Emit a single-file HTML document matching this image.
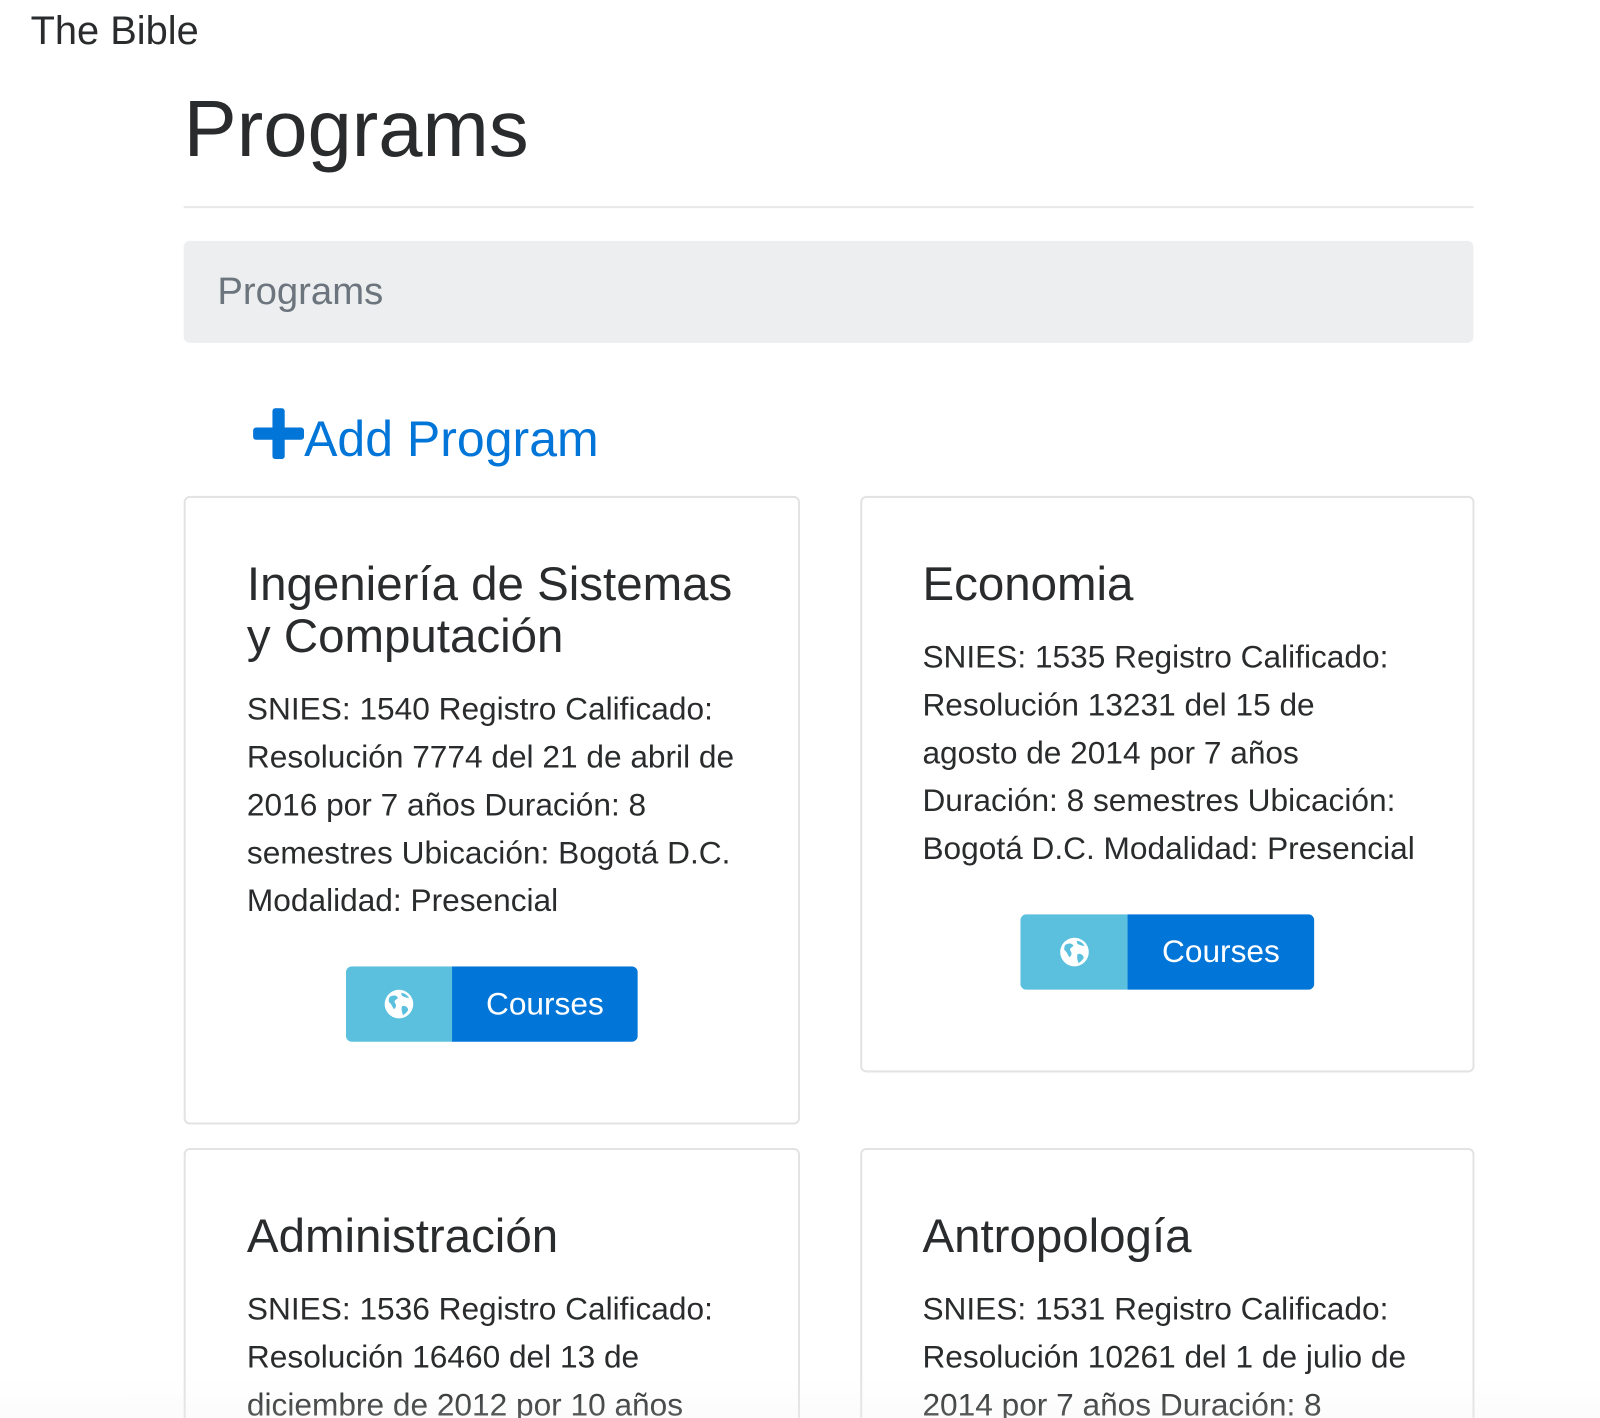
<!DOCTYPE html>
<html><head><meta charset="utf-8"><style>
html,body{margin:0;padding:0;background:#fff;width:1600px;height:1418px;overflow:hidden;position:relative;font-family:"Liberation Sans",Arial,sans-serif;color:#292b2c}
#w{position:absolute;left:0;top:0;width:1568px;height:1390px;transform:scale(1.0204);transform-origin:0 0}
.a{position:absolute;white-space:nowrap}
.card{position:absolute;border:2px solid #e3e3e3;border-radius:6px;background:#fff;box-sizing:border-box}
.t{position:absolute;font-size:46.5px;line-height:51px;color:#292b2c;white-space:nowrap}
.p{position:absolute;font-size:31px;line-height:47px;white-space:nowrap;color:#292b2c}
.btn{position:absolute;height:74px;width:286px;border-radius:6px;overflow:hidden;display:flex}
.btn .i{width:104px;background:#5bc0de;display:flex;align-items:center;justify-content:center}
.btn .c{flex:1;background:#0275d8;color:#fff;font-size:31px;display:flex;align-items:center;justify-content:center}
</style></head><body><div id="w">
<div class="a" style="left:30px;top:9px;font-size:39px;line-height:44px;color:#292b2c">The Bible</div>
<div class="a" style="left:180px;top:80px;font-size:78px;line-height:92px;color:#292b2c">Programs</div>
<div class="a" style="left:180px;top:202px;width:1264px;height:2px;background:#e8e8e8"></div>
<div class="a" style="left:180px;top:236px;width:1264px;height:100px;background:#eceeef;border-radius:6px"></div>
<div class="a" style="left:213px;top:263px;font-size:37.5px;line-height:44px;color:#6c757d">Programs</div>
<svg class="a" style="left:248px;top:400px" width="50" height="50" viewBox="0 0 50 50"><rect x="19" y="0" width="12" height="50" rx="3" fill="#0275d8"/><rect x="0" y="19" width="50" height="12" rx="3" fill="#0275d8"/></svg>
<div class="a" style="left:298px;top:403px;font-size:49px;line-height:56px;color:#0275d8">Add Program</div>

<div class="card" style="left:180px;top:486px;width:604px;height:616px"></div>
<div class="t" style="left:242px;top:547px">Ingeniería de Sistemas<br>y Computación</div>
<div class="p" style="left:242px;top:671px">SNIES: 1540 Registro Calificado:<br>Resolución 7774 del 21 de abril de<br>2016 por 7 años Duración: 8<br>semestres Ubicación: Bogotá D.C.<br>Modalidad: Presencial</div>
<div class="btn" style="left:339px;top:947px"><div class="i"><svg width="30" height="30" viewBox="0 0 30 30"><circle cx="15" cy="15" r="14" fill="#fff"/><path d="M6 8 C9 6 13 6 14 9 C12 11 10 11 11 14 C13 16 12 19 10 20 C8 17 7 14 5 13 C5 11 5 9 6 8Z M17 4 C20 4 23 6 25 9 C22 9 20 8 18 7Z M18 17 C21 16 24 18 24 21 C22 24 20 25 19 26 C18 23 17 20 18 17Z" fill="#5bc0de"/></svg></div><div class="c">Courses</div></div>

<div class="card" style="left:843px;top:486px;width:602px;height:565px"></div>
<div class="t" style="left:904px;top:547px">Economia</div>
<div class="p" style="left:904px;top:620px">SNIES: 1535 Registro Calificado:<br>Resolución 13231 del 15 de<br>agosto de 2014 por 7 años<br>Duración: 8 semestres Ubicación:<br>Bogotá D.C. Modalidad: Presencial</div>
<div class="btn" style="left:1000px;top:896px;width:288px"><div class="i" style="width:105px"><svg width="30" height="30" viewBox="0 0 30 30"><circle cx="15" cy="15" r="14" fill="#fff"/><path d="M6 8 C9 6 13 6 14 9 C12 11 10 11 11 14 C13 16 12 19 10 20 C8 17 7 14 5 13 C5 11 5 9 6 8Z M17 4 C20 4 23 6 25 9 C22 9 20 8 18 7Z M18 17 C21 16 24 18 24 21 C22 24 20 25 19 26 C18 23 17 20 18 17Z" fill="#5bc0de"/></svg></div><div class="c">Courses</div></div>

<div class="card" style="left:180px;top:1125px;width:604px;height:400px"></div>
<div class="t" style="left:242px;top:1186px">Administración</div>
<div class="p" style="left:242px;top:1259px">SNIES: 1536 Registro Calificado:<br>Resolución 16460 del 13 de<br>diciembre de 2012 por 10 años</div>

<div class="card" style="left:843px;top:1125px;width:602px;height:400px"></div>
<div class="t" style="left:904px;top:1186px">Antropología</div>
<div class="p" style="left:904px;top:1259px">SNIES: 1531 Registro Calificado:<br>Resolución 10261 del 1 de julio de<br>2014 por 7 años Duración: 8</div>
<div class="a" style="left:0;top:1350px;width:1568px;height:40px;background:linear-gradient(rgba(255,255,255,0),rgba(240,240,240,0.25))"></div>
</div></body></html>
